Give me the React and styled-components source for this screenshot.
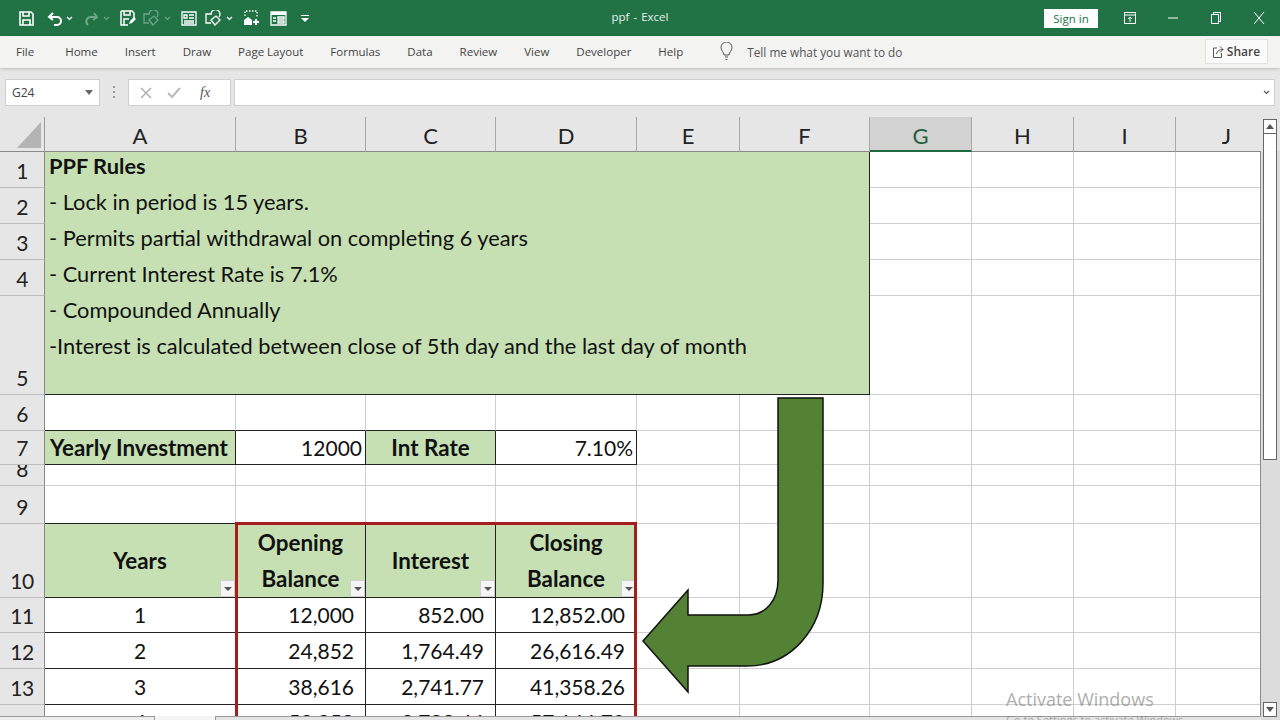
import React from 'react';
import styled, { createGlobalStyle } from 'styled-components';

const GlobalStyle = createGlobalStyle`
  html, body { margin: 0; padding: 0; background: #fff; }
  #root { width: 1280px; height: 720px; overflow: hidden; }
`;

const Page = styled.div`
  width: 1280px;
  height: 720px;
  display: flex;
  flex-direction: column;
  overflow: hidden;
  font-family: "Open Sans", "Liberation Sans", sans-serif;
  background: #e6e6e6;
`;

const TitleBar = styled.header`
  height: 36px;
  flex: none;
  background: #217346;
  display: flex;
  align-items: center;
  position: relative;
  color: #fff;
`;

const Qat = styled.div`
  display: flex;
  align-items: center;
  padding-left: 19px;
  height: 100%;
`;

const QatItem = styled.span`
  display: flex;
  margin-left: ${p => p.$ml || 0}px;
  opacity: ${p => p.$dim ? 0.35 : 1};
`;

const DocTitle = styled.div`
  position: absolute;
  left: 0;
  right: 0;
  top: 9px;
  text-align: center;
  font-size: 11.5px;
  line-height: 16px;
  word-spacing: 1px;
  color: #e6f0ea;
`;

const WinControls = styled.div`
  margin-left: auto;
  display: flex;
  align-items: center;
  height: 100%;
`;

const SignIn = styled.button`
  width: 54px;
  height: 19px;
  margin-right: 10px;
  border: 0;
  padding: 0;
  background: #fff;
  color: #217346;
  font: 11.5px/19px "Open Sans", sans-serif;
`;

const WinBtn = styled.span`
  width: 43px;
  display: flex;
  justify-content: center;
`;

const RibbonTabs = styled.nav`
  height: 32px;
  flex: none;
  box-sizing: border-box;
  padding: 0 0 1px 16px;
  background: #f3f3f2;
  display: flex;
  align-items: center;
  font-size: 11.5px;
  color: #444;
  box-shadow: 0 1px 3px rgba(0, 0, 0, 0.18);
  position: relative;
`;

const Tab = styled.span`
  margin-right: ${p => p.$mr || 27}px;
  white-space: nowrap;
`;

const TellMe = styled.span`
  display: flex;
  align-items: center;
  margin-left: 10px;
  gap: 14px;
  font-size: 11.8px;
  color: #555;
`;

const ShareBtn = styled.button`
  margin-left: auto;
  margin-right: 12px;
  width: 63px;
  height: 25px;
  background: #fafafa;
  border: 1px solid #e2e2e2;
  padding: 0;
  display: flex;
  align-items: center;
  justify-content: center;
  gap: 3px;
  color: #444;
  font: 600 12px "Open Sans", sans-serif;
`;

const FormulaBar = styled.div`
  height: 49px;
  flex: none;
  display: flex;
  align-items: flex-start;
  padding: 11px 5px 0;
  box-sizing: border-box;
  background: #e6e6e6;
`;

const fieldBox = `
  height: 27px;
  box-sizing: border-box;
  background: #fff;
  border: 1px solid #cfcfcf;
  display: flex;
  align-items: center;
`;

const NameBox = styled.div`
  ${fieldBox}
  width: 95px;
  padding: 0 6px;
  justify-content: space-between;
  font-size: 12px;
  color: #444;
`;

const Grip = styled.span`
  width: 2px;
  height: 12px;
  margin: 7px 13px 0;
  background: repeating-linear-gradient(#999 0 2px, transparent 2px 5px);
`;

const FxBox = styled.div`
  ${fieldBox}
  width: 103px;
  margin-right: 3px;
  padding-left: 11px;
  gap: 15px;
  color: #aaa;
`;

const FxLabel = styled.span`
  font: italic 14px "Liberation Serif", serif;
  color: #555;
  margin-left: 4px;
`;

const FormulaInput = styled.div`
  ${fieldBox}
  flex: 1;
  justify-content: flex-end;
  padding-right: 4px;
`;

const Workspace = styled.div`
  flex: 1;
  display: flex;
  min-height: 0;
`;

const SheetArea = styled.div`
  width: 1261px;
  height: 603px;
  position: relative;
  overflow: hidden;
  font-family: Lato, "Liberation Sans", sans-serif;
  &::after {
    content: "";
    position: absolute;
    right: 0;
    top: 34px;
    bottom: 0;
    width: 1px;
    background: #8a8a8a;
    z-index: 5;
  }
`;

const SheetGrid = styled.div`
  display: grid;
  grid-template-columns: 45px 191px 130px 130px 141px 103px 130px 102px 102px 102px 102px;
  grid-template-rows: 35px 36px 36px 36px 36px 99px 36px 34px 21px 38px 74px 35px 36px 36px 36px;
  background: #fff;
  color: #111;
`;

const Corner = styled.div`
  background: #e6e6e6;
  border-right: 1px solid #9a9a9a;
  border-bottom: 1px solid #8a8a8a;
  display: flex;
  align-items: flex-end;
  justify-content: flex-end;
  padding: 0 3px 3px 0;
`;

const ColHead = styled.div`
  background: ${p => p.$active ? '#d2d2d2' : '#e6e6e6'};
  color: ${p => p.$active ? '#1f5f3d' : '#222'};
  border-right: 1px solid #a8a8a8;
  border-bottom: ${p => p.$active ? '2px solid #1e6b41' : '1px solid #8a8a8a'};
  font-size: 22px;
  display: flex;
  align-items: center;
  justify-content: center;
  padding-top: 3px;
  box-sizing: border-box;
`;

const RowHead = styled.div`
  background: #e6e6e6;
  border-right: 1px solid #8a8a8a;
  border-bottom: 1px solid #bdbdbd;
  font-size: 21px;
  letter-spacing: -0.5px;
  line-height: 32px;
  color: #222;
  display: flex;
  align-items: flex-end;
  justify-content: center;
  overflow: hidden;
  box-sizing: border-box;
`;

const Cell = styled.div`
  position: relative;
  box-sizing: border-box;
  background: ${p => p.$green ? '#c6e0b4' : '#fff'};
  border-right: 1px solid ${p => p.$boxed ? '#222' : '#cfcfcf'};
  border-bottom: 1px solid ${p => p.$boxed || p.$darkBottom ? '#222' : '#cfcfcf'};
  font-size: ${p => p.$bold ? 22.4 : 21}px;
  font-weight: ${p => p.$bold ? 700 : 400};
  text-align: ${p => p.$align || 'left'};
  padding: 0 ${p => p.$pr ?? 3}px 0 ${p => p.$align === 'center' ? 0 : 5}px;
  line-height: ${p => p.$lh || 34}px;
  white-space: nowrap;
  overflow: hidden;
`;

const RulesCell = styled.div`
  grid-column: 2 / span 6;
  grid-row: 2 / span 5;
  background: #c6e0b4;
  border-right: 1px solid #222;
  border-bottom: 1px solid #222;
  padding: 0 0 0 4px;
  font-size: 21.8px;
  line-height: 36px;
  box-sizing: border-box;
  overflow: hidden;
`;

const RuleLine = styled.div`
  margin-top: ${p => p.$first ? -4 : 0}px;
  font-weight: ${p => p.$bold ? 700 : 400};
  white-space: nowrap;
`;

const TableHead = styled.div`
  position: relative;
  box-sizing: border-box;
  background: #c6e0b4;
  border-right: 1px solid #222;
  border-bottom: 1px solid #222;
  font-size: 22.4px;
  font-weight: 700;
  line-height: 36px;
  display: flex;
  align-items: center;
  justify-content: center;
  text-align: center;
`;

const FilterBtn = styled.span`
  position: absolute;
  right: 0;
  bottom: 0;
  width: 15px;
  height: 17px;
  box-sizing: border-box;
  background: #f5f5f5;
  border: 1px solid #cfcfcf;
  display: flex;
  align-items: center;
  justify-content: center;
  &::after {
    content: "";
    border-left: 4px solid transparent;
    border-right: 4px solid transparent;
    border-top: 4px solid #555;
  }
`;

const RedFrame = styled.div`
  position: absolute;
  left: 235px;
  top: 405px;
  width: 402px;
  height: 198px;
  box-sizing: border-box;
  border: 3px solid #a51d1d;
  border-bottom: 0;
  pointer-events: none;
  z-index: 2;
`;

const BentArrow = styled.svg`
  position: absolute;
  left: 640px;
  top: 277px;
  z-index: 3;
`;

const Watermark = styled.div`
  position: absolute;
  left: 1006px;
  top: 570px;
  font: 18px/24px "Open Sans", sans-serif;
  color: rgba(120, 120, 120, 0.62);
  white-space: nowrap;
  z-index: 7;
`;

const WatermarkSub = styled.div`
  font-size: 11px;
  line-height: 16px;
  margin-top: 1px;
`;

const HScroll = styled.div`
  position: absolute;
  left: 0;
  right: 0;
  bottom: 0;
  height: 4px;
  display: flex;
  background: #f4f4f4;
  z-index: 6;
`;

const SheetTabs = styled.div`
  width: 155px;
  flex: none;
  background: #ececec;
  border-top: 1px solid #9a9a9a;
  border-right: 1px solid #9a9a9a;
  box-sizing: border-box;
`;

const HTrack = styled.div`
  flex: 1;
  margin-left: 60px;
  background: #e4e4e4;
  border-top: 1px solid #9a9a9a;
  border-left: 1px solid #9a9a9a;
  box-sizing: border-box;
`;

const VScroll = styled.aside`
  width: 19px;
  flex: none;
  background: linear-gradient(#e6e6e6 0 34px, #dcdcdc 34px);
  display: flex;
  flex-direction: column;
  align-items: center;
  box-sizing: border-box;
  padding: 2px 2px 0 0;
`;

const ScrollBtn = styled.span`
  width: 14px;
  height: 15px;
  flex: none;
  box-sizing: border-box;
  background: #fff;
  border: 1px solid #666;
  display: flex;
  align-items: center;
  justify-content: center;
  &::after {
    content: "";
    border-left: 4px solid transparent;
    border-right: 4px solid transparent;
    ${p => p.$down ? 'border-top: 5px solid #555;' : 'border-bottom: 5px solid #555;'}
  }
`;

const ScrollThumb = styled.span`
  width: 14px;
  height: 326px;
  margin-bottom: auto;
  background: #fff;
  border: 1px solid #666;
  border-top-width: 0;
  box-sizing: border-box;
`;

const ScrollBtnBottom = styled(ScrollBtn)`
  margin-bottom: 3px;
`;

const Chev = ({ color = '#fff' }) => (
  <svg width="7" height="5" viewBox="0 0 7 5"><path d="M1 1l2.500 2.500L6 1" fill="none" stroke={color} strokeWidth="1.2" /></svg>
);

const s = { fill: 'none', stroke: '#fff', strokeWidth: 1.3 };

const SaveIcon = () => (
  <svg width="15" height="15" viewBox="0 0 15 15">
    <path {...s} strokeWidth="1.6" d="M1 1h11l2 2v11H1z" />
    <path {...s} strokeWidth="1.6" d="M4 1v4h6V1M4 14V9h7v5" />
  </svg>
);
const UndoIcon = () => (
  <svg width="16" height="15" viewBox="0 0 16 15">
    <path {...s} strokeWidth="2" d="M6 2L2 6l4 3M2 6h8a4 4 0 0 1 0 8H7" />
  </svg>
);
const RedoIcon = () => (
  <svg width="15" height="15" viewBox="0 0 15 15">
    <path {...s} strokeWidth="2" d="M10 2l3 4-4 3M13 6H7a4.500 4.500 0 0 0-3 8" />
  </svg>
);
const SaveAsIcon = () => (
  <svg width="16" height="16" viewBox="0 0 16 16">
    <path {...s} strokeWidth="1.5" d="M1 1h11l2 2v5M8 15H1V1M4 1v4h6V1M4 15V9h5" />
    <path fill="#fff" d="M9 14l1-3 4-4 2 2-4 4z" />
  </svg>
);
const ShapeIcon = () => (
  <svg width="16" height="16" viewBox="0 0 16 16">
    <path {...s} d="M6 13H1V4h6" />
    <path {...s} d="M6 4a4.500 4.500 0 1 1 8 3" />
    <path {...s} d="M6 10l5-4 4 4-5 5z" />
  </svg>
);
const FormIcon = () => (
  <svg width="16" height="15" viewBox="0 0 16 15">
    <path {...s} d="M1 1h14v13H1z" />
    <path {...s} d="M3 4h3v3H3zM8 4h5M8 7h5M3 10h10M3 12h10" />
  </svg>
);
const AddIcon = () => (
  <svg width="16" height="16" viewBox="0 0 16 16">
    <path {...s} strokeDasharray="1.500 1.500" d="M2 6V1h12v7" />
    <path fill="#fff" d="M1 10l4-3 4 3v5H1z" />
    <path {...s} strokeWidth="2" d="M13 9v6M10 12h6" />
  </svg>
);
const PanelIcon = () => (
  <svg width="17" height="15" viewBox="0 0 17 15">
    <path {...s} d="M1 1h15v13H1z" />
    <path fill="#fff" d="M1 1h15v3H1z" />
    <path {...s} d="M3 7h3M3 10h3M8 6h6v2H8zM8 10h6v2H8z" />
  </svg>
);
const QatMore = () => (
  <svg width="8" height="7" viewBox="0 0 8 7"><path fill="#fff" d="M0 0h8v1H0zM0 3h8L4 7z" /></svg>
);
const DisplayIcon = () => (
  <svg width="12" height="12" viewBox="0 0 12 12">
    <path {...s} strokeWidth="1" d="M.5.500h11v11H.500zM.500 3h11M6 10V5M4 7l2-2 2 2" />
  </svg>
);
const MinIcon = () => (
  <svg width="10" height="10" viewBox="0 0 10 10"><path {...s} strokeWidth="1" d="M0 5h10" /></svg>
);
const RestoreIcon = () => (
  <svg width="10" height="12" viewBox="0 0 10 12">
    <path {...s} strokeWidth="1" d="M.500 2.500h7v9h-7zM2.500 2.500v-2h7v9h-2" />
  </svg>
);
const CloseIcon = () => (
  <svg width="12" height="14" viewBox="0 0 12 14"><path {...s} strokeWidth="1" d="M1 1l10 12M11 1L1 13" /></svg>
);
const BulbIcon = () => (
  <svg width="13" height="19" viewBox="0 0 13 19">
    <path fill="none" stroke="#555" d="M4 13c0-3-3-4-3-7.500a5.500 5.500 0 0 1 11 0C12 9 9 10 9 13z" />
    <path fill="none" stroke="#555" d="M5 15h3M5.500 17.500h2" />
  </svg>
);
const ShareIcon = () => (
  <svg width="11" height="13" viewBox="0 0 11 13">
    <path fill="none" stroke="#555" d="M7 1.500l3 3-3 3M10 4.500C6 4.500 4 6 3.500 9" />
    <path fill="none" stroke="#555" d="M4 3H.500v9.500h8V8" />
  </svg>
);
const Caret = () => (
  <svg width="8" height="5" viewBox="0 0 8 5"><path fill="#666" d="M0 0h8L4 5z" /></svg>
);

const columns = ['A', 'B', 'C', 'D', 'E', 'F', 'G', 'H', 'I', 'J'];
const tabs = ['Home', 'Insert', 'Draw', 'Page Layout', 'Formulas', 'Data', 'Review', 'View', 'Developer', 'Help'];
const rules = [
  '- Lock in period is 15 years.',
  '- Permits partial withdrawal on completing 6 years',
  '- Current Interest Rate is 7.1%',
  '- Compounded Annually',
  '-Interest is calculated between close of 5th day and the last day of month',
];
const rows = [
  [11, 34, '1', '12,000', '852.00', '12,852.00'],
  [12, 36, '2', '24,852', '1,764.49', '26,616.49'],
  [13, 36, '3', '38,616', '2,741.77', '41,358.26'],
  [14, 34, '4', '53,358', '3,788.44', '57,146.70'],
];

const BlankCells = ({ n, dark }) => Array.from({ length: n }, (_, i) => <Cell key={i} $darkBottom={dark} />);

export default function App() {
  return (
    <Page>
      <GlobalStyle />
      <TitleBar>
        <Qat>
          <QatItem><SaveIcon /></QatItem>
          <QatItem $ml={13}><UndoIcon /></QatItem>
          <QatItem $ml={3}><Chev /></QatItem>
          <QatItem $ml={11} $dim><RedoIcon /></QatItem>
          <QatItem $ml={4} $dim><Chev /></QatItem>
          <QatItem $ml={10}><SaveAsIcon /></QatItem>
          <QatItem $ml={7} $dim><ShapeIcon /></QatItem>
          <QatItem $ml={5} $dim><Chev /></QatItem>
          <QatItem $ml={10}><FormIcon /></QatItem>
          <QatItem $ml={8}><ShapeIcon /></QatItem>
          <QatItem $ml={5}><Chev /></QatItem>
          <QatItem $ml={10}><AddIcon /></QatItem>
          <QatItem $ml={11}><PanelIcon /></QatItem>
          <QatItem $ml={14}><QatMore /></QatItem>
        </Qat>
        <DocTitle>ppf - Excel</DocTitle>
        <WinControls>
          <SignIn>Sign in</SignIn>
          <WinBtn><DisplayIcon /></WinBtn>
          <WinBtn><MinIcon /></WinBtn>
          <WinBtn><RestoreIcon /></WinBtn>
          <WinBtn><CloseIcon /></WinBtn>
        </WinControls>
      </TitleBar>

      <RibbonTabs>
        <Tab $mr={31}>File</Tab>
        {tabs.map(t => <Tab key={t}>{t}</Tab>)}
        <TellMe><BulbIcon />Tell me what you want to do</TellMe>
        <ShareBtn><ShareIcon />Share</ShareBtn>
      </RibbonTabs>

      <FormulaBar>
        <NameBox>G24<Caret /></NameBox>
        <Grip />
        <FxBox>
          <svg width="12" height="12" viewBox="0 0 12 12"><path fill="none" stroke="#aaa" strokeWidth="1.4" d="M1 1l10 10M11 1L1 11" /></svg>
          <svg width="14" height="12" viewBox="0 0 14 12"><path fill="none" stroke="#bbb" strokeWidth="2" d="M1 6l4 4 8-9" /></svg>
          <FxLabel>fx</FxLabel>
        </FxBox>
        <FormulaInput><Chev color="#555" /></FormulaInput>
      </FormulaBar>

      <Workspace>
        <SheetArea>
          <SheetGrid>
            <Corner>
              <svg width="24" height="26" viewBox="0 0 24 26"><path fill="#b4b4b4" d="M24 0v26H0z" /></svg>
            </Corner>
            {columns.map(c => <ColHead key={c} $active={c === 'G'}>{c}</ColHead>)}

            <RowHead>1</RowHead>
            <RulesCell>
              <RuleLine $first $bold>PPF Rules</RuleLine>
              {rules.map(r => <RuleLine key={r}>{r}</RuleLine>)}
            </RulesCell>
            <BlankCells n={4} />
            <RowHead>2</RowHead>
            <BlankCells n={4} />
            <RowHead>3</RowHead>
            <BlankCells n={4} />
            <RowHead>4</RowHead>
            <BlankCells n={4} />
            <RowHead>5</RowHead>
            <BlankCells n={4} />

            <RowHead>6</RowHead>
            <BlankCells n={4} dark />
            <BlankCells n={6} />

            <RowHead>7</RowHead>
            <Cell $green $boxed $bold $pr={0}>Yearly Investment</Cell>
            <Cell $boxed $align="right">12000</Cell>
            <Cell $green $boxed $bold $align="center" $pr={0}>Int Rate</Cell>
            <Cell $boxed $align="right">7.10%</Cell>
            <BlankCells n={6} />

            <RowHead>8</RowHead>
            <BlankCells n={10} />

            <RowHead>9</RowHead>
            <BlankCells n={1} dark />
            <BlankCells n={9} />

            <RowHead>10</RowHead>
            <TableHead>Years<FilterBtn /></TableHead>
            <TableHead>Opening<br />Balance<FilterBtn /></TableHead>
            <TableHead>Interest<FilterBtn /></TableHead>
            <TableHead>Closing<br />Balance<FilterBtn /></TableHead>
            <BlankCells n={6} />

            {rows.map(([n, lh, y, open, int, close]) => (
              <React.Fragment key={n}>
                <RowHead>{n}</RowHead>
                <Cell $boxed $lh={lh} $align="center" $pr={0}>{y}</Cell>
                <Cell $boxed $lh={lh} $align="right" $pr={11}>{open}</Cell>
                <Cell $boxed $lh={lh} $align="right" $pr={11}>{int}</Cell>
                <Cell $boxed $lh={lh} $align="right" $pr={11}>{close}</Cell>
                <BlankCells n={6} />
              </React.Fragment>
            ))}
          </SheetGrid>

          <RedFrame />
          <BentArrow width="186" height="300" viewBox="640 394 186 300">
            <path
              fill="#548235"
              stroke="#111"
              strokeWidth="1.5"
              d="M778 398H823V583C823 630 790 666 747 666H688V692L643 641L688 590V615H748C766 615 778 600 778 580Z"
            />
          </BentArrow>
          <Watermark>
            Activate Windows
            <WatermarkSub>Go to Settings to activate Windows.</WatermarkSub>
          </Watermark>
          <HScroll>
            <SheetTabs />
            <HTrack />
          </HScroll>
        </SheetArea>
        <VScroll>
          <ScrollBtn />
          <ScrollThumb />
          <ScrollBtnBottom $down />
        </VScroll>
      </Workspace>
    </Page>
  );
}
